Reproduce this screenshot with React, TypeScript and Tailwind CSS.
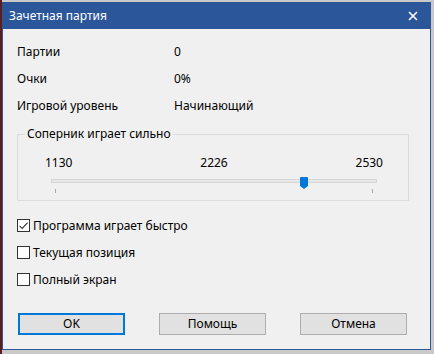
import { useState } from "react";

const stats = [
  { label: "Партии", value: "0" },
  { label: "Очки", value: "0%" },
  { label: "Игровой уровень", value: "Начинающий" },
];

const options = [
  { label: "Программа играет быстро", checked: true },
  { label: "Текущая позиция", checked: false },
  { label: "Полный экран", checked: false },
];

function CheckBox({ checked }: { checked: boolean }) {
  return (
    <div className="w-[13px] h-[13px] border border-[#333] bg-white flex items-center justify-center shrink-0">
      {checked && (
        <svg width="11" height="11" viewBox="0 0 11 11" fill="none">
          <path d="M1.5 5.8 L4.2 8.4 L9.6 2.6" stroke="#333" strokeWidth="1.1" />
        </svg>
      )}
    </div>
  );
}

export default function App() {
  const [opts, setOpts] = useState(options.map((o) => o.checked));

  return (
    <div
      className="w-[434px] h-[354px] bg-[#c9c9c9] flex overflow-hidden text-[12px] text-black"
      style={{ fontFamily: '"Noto Sans", "Open Sans", sans-serif' }}
    >
      <div className="w-[2px] h-full bg-[#5b1d1d]" />
      <div className="mt-[2px] w-[429px] h-[348px] border border-[#2b579a] bg-[#f0f0f0] flex flex-col">
        <div className="h-[26px] bg-[#2b579a] text-white flex items-center justify-between pl-[6px] pr-[12px] shrink-0">
          <span className="leading-4">Зачетная партия</span>
          <svg width="10" height="10" viewBox="0 0 10 10">
            <path d="M1 1 L9 9 M9 1 L1 9" stroke="white" strokeWidth="1.6" />
          </svg>
        </div>

        <div className="pl-[14px] pr-[21px] pt-[9px] flex flex-col">
          {stats.map((s) => (
            <div key={s.label} className="h-[27px] flex items-center leading-4">
              <span className="w-[157px]">{s.label}</span>
              <span>{s.value}</span>
            </div>
          ))}

          <div className="relative mt-[15px] h-[67px] border border-[#dcdcdc]">
            <span className="absolute -top-[9px] left-[7px] px-[2px] bg-[#f0f0f0] leading-4">
              Соперник играет сильно
            </span>
            <div className="pt-[20px] pl-[27px] pr-[25px] flex justify-between leading-4">
              <span>1130</span>
              <span>2226</span>
              <span>2530</span>
            </div>
            <div className="relative ml-[33px] mt-[8px] w-[326px] h-[4px] bg-[#e7e7e7] border border-[#d6d6d6]">
              <svg
                className="absolute left-[248px] -top-[3px]"
                width="8"
                height="12"
                viewBox="0 0 8 12"
              >
                <path d="M0 1 Q0 0 1 0 H7 Q8 0 8 1 V9 L4 12 L0 9 Z" fill="#0078d7" />
              </svg>
            </div>
            <div className="ml-[37px] w-[318px] mt-[6px] h-[4px] flex justify-between">
              <div className="w-px h-[4px] bg-[#aaa]" />
              <div className="w-px h-[4px] bg-[#aaa]" />
            </div>
          </div>

          <div className="mt-[11px] flex flex-col">
            {options.map((o, i) => (
              <label
                key={o.label}
                className="h-[27px] flex items-center gap-[3px] leading-4 cursor-default"
                onClick={() => setOpts(opts.map((v, j) => (j === i ? !v : v)))}
              >
                <CheckBox checked={opts[i]} />
                <span>{o.label}</span>
              </label>
            ))}
          </div>

          <div className="mt-[20px] flex">
            <button className="w-[107px] h-[22px] ml-px border-2 border-[#0078d7] bg-[#e1e1e1] leading-4">
              OK
            </button>
            <button className="w-[107px] h-[22px] ml-[34px] border border-[#adadad] bg-[#e1e1e1] leading-4">
              Помощь
            </button>
            <button className="w-[107px] h-[22px] ml-[34px] border border-[#adadad] bg-[#e1e1e1] leading-4">
              Отмена
            </button>
          </div>
        </div>
      </div>
    </div>
  );
}
